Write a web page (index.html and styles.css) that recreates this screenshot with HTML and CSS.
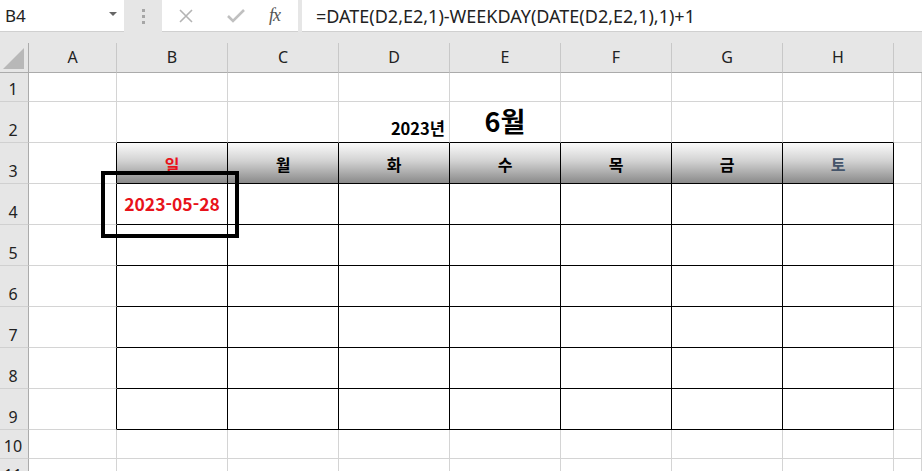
FILE: index.html
```html
<!DOCTYPE html>
<html lang="ko">
<head>
  <meta charset="UTF-8">
  <title>달력 - Excel</title>
  <link rel="stylesheet" href="styles.css">
</head>
<body>
  <!-- 수식 입력줄 -->
  <div class="formula-bar">
    <div class="name-box">
      <span>B4</span>
      <span class="drop-arrow"></span>
    </div>
    <div class="grip">
      <i></i><i></i><i></i>
    </div>
    <div class="fx-buttons">
      <svg class="fx-icon" width="16" height="16" viewBox="0 0 16 16">
        <path d="M2 2 L14 14 M14 2 L2 14" stroke="#b4b4b4" stroke-width="1.6" fill="none"/>
      </svg>
      <svg class="fx-icon" width="20" height="16" viewBox="0 0 20 16">
        <path d="M2 8 L7 13 L18 2" stroke="#c0c0c0" stroke-width="2.6" fill="none"/>
      </svg>
      <span class="fx-label">fx</span>
    </div>
    <div class="formula-input">=DATE(D2,E2,1)-WEEKDAY(DATE(D2,E2,1),1)+1</div>
  </div>

  <!-- 시트 -->
  <div class="sheet">
    <div class="corner"><span class="corner-tri"></span></div>
    <div class="col-head">A</div>
    <div class="col-head">B</div>
    <div class="col-head">C</div>
    <div class="col-head">D</div>
    <div class="col-head">E</div>
    <div class="col-head">F</div>
    <div class="col-head">G</div>
    <div class="col-head">H</div>
    <div class="col-head rest"></div>

    <!-- 1행 -->
    <div class="row-head">1</div>
    <div class="cell"></div><div class="cell"></div><div class="cell"></div><div class="cell"></div>
    <div class="cell"></div><div class="cell"></div><div class="cell"></div><div class="cell"></div><div class="cell"></div>

    <!-- 2행 -->
    <div class="row-head">2</div>
    <div class="cell"></div>
    <div class="cell top-edge"></div>
    <div class="cell top-edge"></div>
    <div class="cell top-edge year">2023년</div>
    <div class="cell top-edge month">6월</div>
    <div class="cell top-edge"></div>
    <div class="cell top-edge"></div>
    <div class="cell top-edge"></div>
    <div class="cell"></div>

    <!-- 3행: 요일 -->
    <div class="row-head">3</div>
    <div class="cell left-edge"></div>
    <div class="cell cal day sun">일</div>
    <div class="cell cal day">월</div>
    <div class="cell cal day">화</div>
    <div class="cell cal day">수</div>
    <div class="cell cal day">목</div>
    <div class="cell cal day">금</div>
    <div class="cell cal day sat">토</div>
    <div class="cell"></div>

    <!-- 4행 -->
    <div class="row-head">4</div>
    <div class="cell left-edge"></div>
    <div class="cell cal date sun">2023-05-28</div>
    <div class="cell cal"></div><div class="cell cal"></div><div class="cell cal"></div>
    <div class="cell cal"></div><div class="cell cal"></div><div class="cell cal"></div>
    <div class="cell"></div>

    <div class="row-head">5</div>
    <div class="cell left-edge"></div>
    <div class="cell cal"></div><div class="cell cal"></div><div class="cell cal"></div><div class="cell cal"></div>
    <div class="cell cal"></div><div class="cell cal"></div><div class="cell cal"></div>
    <div class="cell"></div>

    <div class="row-head">6</div>
    <div class="cell left-edge"></div>
    <div class="cell cal"></div><div class="cell cal"></div><div class="cell cal"></div><div class="cell cal"></div>
    <div class="cell cal"></div><div class="cell cal"></div><div class="cell cal"></div>
    <div class="cell"></div>

    <div class="row-head">7</div>
    <div class="cell left-edge"></div>
    <div class="cell cal"></div><div class="cell cal"></div><div class="cell cal"></div><div class="cell cal"></div>
    <div class="cell cal"></div><div class="cell cal"></div><div class="cell cal"></div>
    <div class="cell"></div>

    <div class="row-head">8</div>
    <div class="cell left-edge"></div>
    <div class="cell cal"></div><div class="cell cal"></div><div class="cell cal"></div><div class="cell cal"></div>
    <div class="cell cal"></div><div class="cell cal"></div><div class="cell cal"></div>
    <div class="cell"></div>

    <div class="row-head">9</div>
    <div class="cell left-edge"></div>
    <div class="cell cal"></div><div class="cell cal"></div><div class="cell cal"></div><div class="cell cal"></div>
    <div class="cell cal"></div><div class="cell cal"></div><div class="cell cal"></div>
    <div class="cell"></div>

    <div class="row-head">10</div>
    <div class="cell"></div><div class="cell"></div><div class="cell"></div><div class="cell"></div>
    <div class="cell"></div><div class="cell"></div><div class="cell"></div><div class="cell"></div><div class="cell"></div>

    <div class="row-head">11</div>
    <div class="cell"></div><div class="cell"></div><div class="cell"></div><div class="cell"></div>
    <div class="cell"></div><div class="cell"></div><div class="cell"></div><div class="cell"></div><div class="cell"></div>

    <!-- 선택 표시 -->
    <div class="mark-box"></div>
  </div>
</body>
</html>
```

FILE: styles.css
```css
/* 기본 */
body {
  margin: 0;
  width: 922px;
  height: 471px;
  overflow: hidden;
  background-color: #e6e6e6;
  font-family: "Noto Sans", "Noto Sans CJK KR", sans-serif;
}

/* 수식 입력줄 */
.formula-bar {
  display: flex;
  height: 32px;
  margin-bottom: 11px;
  background-color: #e6e6e6;
}

.name-box {
  width: 124px;
  background-color: #ffffff;
  border-bottom: 1px solid #d0d0d0;
  box-sizing: border-box;
  display: flex;
  align-items: center;
  justify-content: space-between;
  padding: 0 7px 0 5px;
  font-size: 17px;
  color: #222;
}

.drop-arrow {
  width: 0;
  height: 0;
  border-left: 4px solid transparent;
  border-right: 4px solid transparent;
  border-top: 4px solid #666;
  margin-top: -3px;
}

.grip {
  width: 38px;
  display: flex;
  flex-direction: column;
  align-items: center;
  justify-content: center;
  gap: 3px;
}

.grip i {
  display: block;
  width: 3px;
  height: 3px;
  background-color: #a6a6a6;
}

.fx-buttons {
  width: 136px;
  background-color: #ffffff;
  border-bottom: 1px solid #d0d0d0;
  box-sizing: border-box;
  display: flex;
  align-items: center;
  padding-left: 16px;
}

.fx-buttons svg:first-child {
  margin-right: 32px;
}

.fx-label {
  margin-left: 23px;
  font-family: "Liberation Serif", serif;
  font-style: italic;
  font-size: 18px;
  color: #555;
  letter-spacing: -1px;
}

.formula-input {
  flex: 1;
  margin-left: 4px;
  background-color: #ffffff;
  border-bottom: 1px solid #d0d0d0;
  box-sizing: border-box;
  padding-left: 14px;
  display: flex;
  align-items: center;
  font-size: 18px;
  color: #222;
  white-space: nowrap;
}

/* 시트 격자 */
.sheet {
  position: relative;
  display: grid;
  grid-template-columns: 29px 88px repeat(7, 111px) 1fr;
  grid-template-rows: 30px 29px 41px repeat(7, 41px) 29px 29px;
  background-color: #ffffff;
}

.corner,
.col-head,
.row-head {
  background-color: #e6e6e6;
  box-sizing: border-box;
  color: #222;
  font-size: 16px;
}

.corner {
  border-right: 1px solid #ababab;
  border-bottom: 1px solid #ababab;
  display: flex;
  align-items: flex-end;
  justify-content: flex-end;
  padding: 0 4px 3px 0;
}

.corner-tri {
  width: 0;
  height: 0;
  border-left: 21px solid transparent;
  border-bottom: 21px solid #b8b8b8;
}

.col-head {
  border-bottom: 1px solid #ababab;
  border-right: 1px solid #c8c8c8;
  display: flex;
  align-items: center;
  justify-content: center;
  padding-bottom: 2px;
}

.col-head.rest {
  border-right: none;
}

.row-head {
  border-right: 1px solid #ababab;
  border-bottom: 1px solid #d0d0d0;
  display: flex;
  align-items: flex-end;
  justify-content: center;
  padding: 0 2px 0 0;
  line-height: 24px;
}

.cell {
  box-sizing: border-box;
  border-right: 1px solid #d4d4d4;
  border-bottom: 1px solid #d4d4d4;
  display: flex;
  align-items: center;
  justify-content: center;
  font-family: "Noto Sans CJK KR", sans-serif;
  font-weight: bold;
  font-size: 16px;
  color: #000;
  white-space: nowrap;
}

/* 달력 테두리 */
.top-edge {
  border-bottom-color: #000;
}

.left-edge {
  border-right-color: #000;
}

.cal {
  border-right-color: #000;
  border-bottom-color: #000;
}

.day {
  background: linear-gradient(to bottom, #fafafa 0%, #d2d2d2 45%, #8a8a8a 100%);
  padding-top: 1px;
}

.year {
  justify-content: flex-end;
  align-items: flex-end;
  padding: 0 4px 2px 0;
  font-size: 16.5px;
}

.month {
  align-items: flex-end;
  padding-bottom: 3px;
  font-size: 27px;
  line-height: 36px;
}

.date {
  font-size: 17.5px;
  padding-bottom: 2px;
}

.sun {
  color: #e8121a;
}

.sat {
  color: #44546a;
}

/* B4 위 두꺼운 사각형 */
.mark-box {
  position: absolute;
  left: 101px;
  top: 128px;
  width: 138px;
  height: 67px;
  border: 4px solid #000;
  box-sizing: border-box;
  pointer-events: none;
}
```
